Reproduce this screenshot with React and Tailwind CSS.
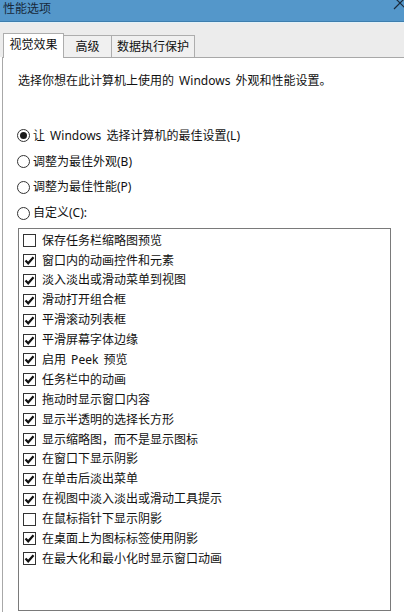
import React from 'react';

const options = [
  { label: '保存任务栏缩略图预览', checked: false },
  { label: '窗口内的动画控件和元素', checked: true },
  { label: '淡入淡出或滑动菜单到视图', checked: true },
  { label: '滑动打开组合框', checked: true },
  { label: '平滑滚动列表框', checked: true },
  { label: '平滑屏幕字体边缘', checked: true },
  { label: '启用 Peek 预览', checked: true },
  { label: '任务栏中的动画', checked: true },
  { label: '拖动时显示窗口内容', checked: true },
  { label: '显示半透明的选择长方形', checked: true },
  { label: '显示缩略图，而不是显示图标', checked: true },
  { label: '在窗口下显示阴影', checked: true },
  { label: '在单击后淡出菜单', checked: true },
  { label: '在视图中淡入淡出或滑动工具提示', checked: true },
  { label: '在鼠标指针下显示阴影', checked: false },
  { label: '在桌面上为图标标签使用阴影', checked: true },
  { label: '在最大化和最小化时显示窗口动画', checked: true },
];

const radios = [
  { label: '让 Windows 选择计算机的最佳设置(L)', selected: true },
  { label: '调整为最佳外观(B)', selected: false },
  { label: '调整为最佳性能(P)', selected: false },
  { label: '自定义(C):', selected: false },
];

const Radio = ({ selected }) => (
  <span className="w-[13px] h-[13px] rounded-full border border-[#333] bg-white flex items-center justify-center shrink-0">
    {selected && <span className="w-[7px] h-[7px] rounded-full bg-[#1a1a1a]" />}
  </span>
);

const Checkbox = ({ checked }) => (
  <span className="w-[13px] h-[13px] border border-[#333] bg-white flex items-center justify-center shrink-0">
    {checked && (
      <svg width="11" height="11" viewBox="0 0 11 11">
        <path d="M1.5 5.5 L4.2 8.3 L9.5 2.2" fill="none" stroke="#111" strokeWidth="2.2" />
      </svg>
    )}
  </span>
);

export default function App() {
  return (
    <div
      className="w-[404px] h-[612px] overflow-hidden bg-white flex flex-col text-[12px] text-[#111] [word-spacing:2px]"
      style={{ fontFamily: '"Noto Sans", "Noto Sans CJK SC", sans-serif' }}
    >
      {/* title bar */}
      <div className="h-[22px] shrink-0 bg-[#5497ca] border-b border-[#3e7eae] flex justify-between items-start pl-[3px] overflow-hidden">
        <span className="text-[12px] leading-[18px] text-[#17293b]">性能选项</span>
        <svg width="16" height="16" viewBox="0 0 16 16" className="-mt-[5px] -mr-[4px]">
          <path d="M2 2 L14 14 M14 2 L2 14" stroke="#1b2a3a" strokeWidth="1.2" />
        </svg>
      </div>

      {/* tab strip */}
      <div className="shrink-0 bg-[#ececec] border-t border-[#e2f1f8] pt-[10px] pl-[3px] flex items-end">
        <div className="relative z-10 h-[25px] w-[61px] bg-white border-l border-t border-r border-[#adadad] -mb-px flex items-center justify-center pb-[2px]">
          视觉效果
        </div>
        <div className="h-[22px] w-[48px] bg-[#f0f0f0] border-t border-r border-[#adadad] flex items-center justify-center">
          高级
        </div>
        <div className="h-[22px] w-[83px] bg-[#f0f0f0] border-t border-r border-[#adadad] flex items-center justify-center">
          数据执行保护
        </div>
      </div>

      {/* panel */}
      <div className="relative flex-1 ml-[2px] border-l border-t border-[#a8a8a8] bg-white pl-[15px] pt-[15px] flex flex-col">
        <p className="leading-[16px]">选择你想在此计算机上使用的 Windows 外观和性能设置。</p>

        <div className="mt-[34px] flex flex-col">
          {radios.map((r) => (
            <div key={r.label} className="h-[25.8px] flex items-center gap-[3px] -ml-px">
              <Radio selected={r.selected} />
              <span>{r.label}</span>
            </div>
          ))}
        </div>

        <div className="mt-[2px] w-[373px] h-[383px] border border-[#7a7a7a] pt-[1.5px] pl-[4px] flex flex-col">
          {options.map((o) => (
            <div key={o.label} className="h-[19.9px] flex items-center gap-[6px] shrink-0">
              <Checkbox checked={o.checked} />
              <span>{o.label}</span>
            </div>
          ))}
        </div>
      </div>
    </div>
  );
}
